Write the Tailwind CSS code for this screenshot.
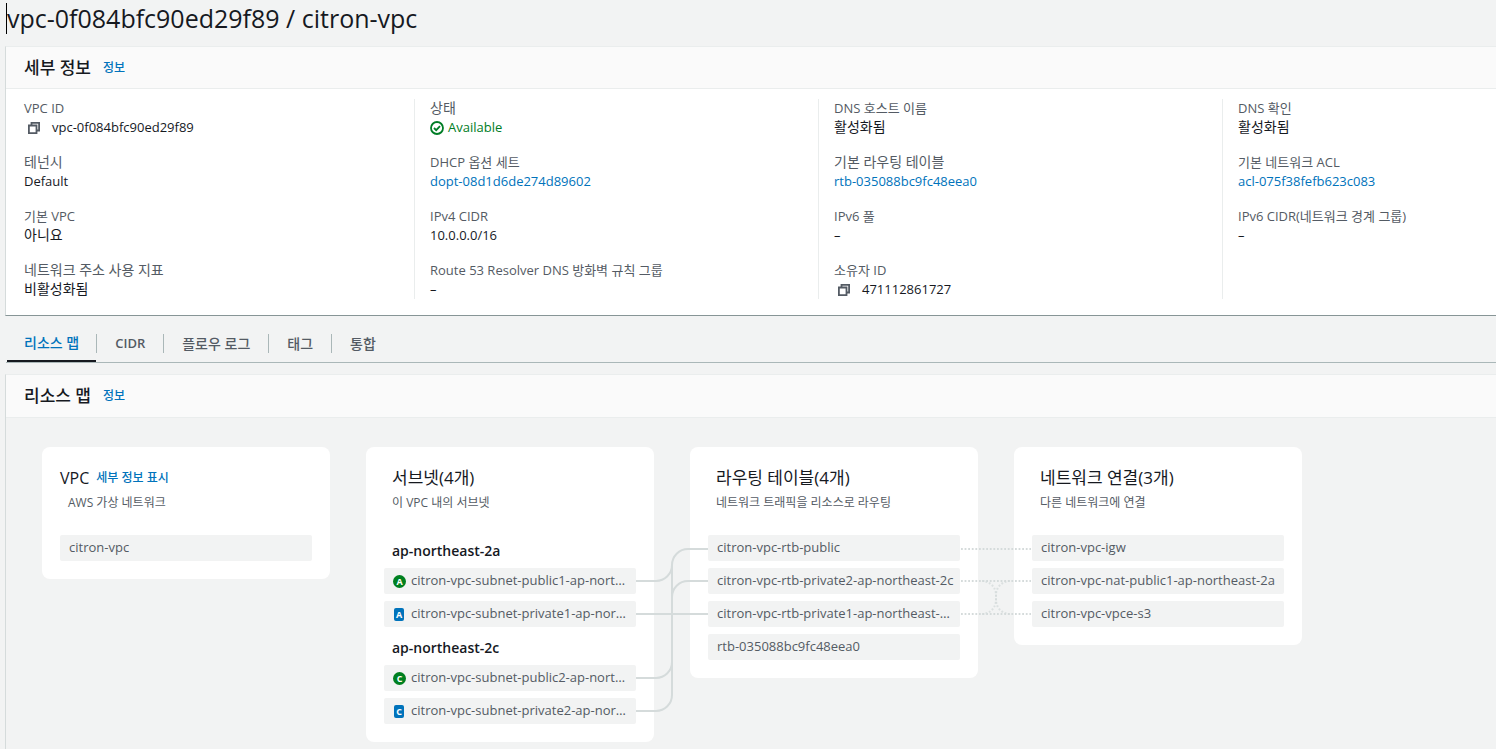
<!DOCTYPE html>
<html lang="ko">
<head>
    <meta charset="UTF-8">
    <meta name="viewport" content="width=device-width, initial-scale=1.0">
    <title>vpc-0f084bfc90ed29f89 / citron-vpc</title>
    <script src="https://cdn.jsdelivr.net/npm/@tailwindcss/browser@4"></script>
</head>
<body class="h-screen overflow-hidden bg-[#f2f3f3] pl-[5px] font-['Open_Sans','Noto_Sans_CJK_KR',sans-serif] text-[13px] text-[#16191f]">
    <!-- Shared icons -->
    <svg class="hidden">
        <symbol id="icon-copy" viewBox="0 0 14 14">
            <path d="M4.500 4.500V1.900h7.600v7.600H9.500M1.900 4.500h7.600v7.600H1.900z" fill="none" stroke="#545b64" stroke-width="1.800"/>
        </symbol>
    </svg>

    <header class="h-[46px] pt-[3px]">
        <h1 class="ml-px h-[31px] border-l border-black text-[25px] leading-[30px]">vpc-0f084bfc90ed29f89 / citron-vpc</h1>
    </header>

    <main>
        <!-- Details -->
        <section class="border-y border-l border-t-[#eaeded] border-b-[#879596] border-l-[#d5dbdb] bg-white">
            <div class="flex h-[42px] items-center gap-3 border-b border-[#eaeded] bg-[#fafafa] pl-[18px]">
                <h2 class="text-[17px] font-medium leading-[22px]">세부 정보</h2>
                <a href="#" class="text-xs font-medium text-[#0073bb]">정보</a>
            </div>
            <div class="grid grid-cols-[408px_404px_404px_1fr] pt-[10px] pb-4">
                <dl class="flex flex-col gap-4 pl-[18px]">
                    <div>
                        <dt class="leading-[18px] text-[#545b64]">VPC ID</dt>
                        <dd class="flex items-center leading-5"><button aria-label="VPC ID 복사" class="ml-[3px] mr-[11px] pt-[2px]"><svg class="size-[14px]"><use href="#icon-copy"/></svg></button>vpc-0f084bfc90ed29f89</dd>
                    </div>
                    <div>
                        <dt class="text-sm leading-[18px] text-[#545b64]">테넌시</dt>
                        <dd class="leading-5">Default</dd>
                    </div>
                    <div>
                        <dt class="leading-[18px] text-[#545b64]">기본 VPC</dt>
                        <dd class="text-sm leading-5">아니요</dd>
                    </div>
                    <div>
                        <dt class="text-sm leading-[18px] text-[#545b64]">네트워크 주소 사용 지표</dt>
                        <dd class="text-sm leading-5">비활성화됨</dd>
                    </div>
                </dl>
                <dl class="flex flex-col gap-4 border-l border-[#eaeded] pl-[15px]">
                    <div>
                        <dt class="text-sm leading-[18px] text-[#545b64]">상태</dt>
                        <dd class="flex items-center gap-1 leading-5 text-[#007d26]">
                            <svg class="mt-[2px] size-[14px]" viewBox="0 0 14 14" fill="none" stroke="#007d26" stroke-width="1.800"><circle cx="7" cy="7" r="6"/><path d="M4 7l2.200 2.200L10 5.200"/></svg>Available
                        </dd>
                    </div>
                    <div>
                        <dt class="leading-[18px] text-[#545b64]">DHCP 옵션 세트</dt>
                        <dd class="leading-5"><a href="#" class="text-[#0073bb]">dopt-08d1d6de274d89602</a></dd>
                    </div>
                    <div>
                        <dt class="leading-[18px] text-[#545b64]">IPv4 CIDR</dt>
                        <dd class="leading-5">10.0.0.0/16</dd>
                    </div>
                    <div>
                        <dt class="leading-[18px] text-[#545b64]">Route 53 Resolver DNS 방화벽 규칙 그룹</dt>
                        <dd class="leading-5">–</dd>
                    </div>
                </dl>
                <dl class="flex flex-col gap-4 border-l border-[#eaeded] pl-[15px]">
                    <div>
                        <dt class="leading-[18px] text-[#545b64]">DNS 호스트 이름</dt>
                        <dd class="text-sm leading-5">활성화됨</dd>
                    </div>
                    <div>
                        <dt class="text-sm leading-[18px] text-[#545b64]">기본 라우팅 테이블</dt>
                        <dd class="leading-5"><a href="#" class="text-[#0073bb]">rtb-035088bc9fc48eea0</a></dd>
                    </div>
                    <div>
                        <dt class="leading-[18px] text-[#545b64]">IPv6 풀</dt>
                        <dd class="leading-5">–</dd>
                    </div>
                    <div>
                        <dt class="leading-[18px] text-[#545b64]">소유자 ID</dt>
                        <dd class="flex items-center leading-5"><button aria-label="소유자 ID 복사" class="ml-[3px] mr-[11px] pt-[2px]"><svg class="size-[14px]"><use href="#icon-copy"/></svg></button>471112861727</dd>
                    </div>
                </dl>
                <dl class="flex flex-col gap-4 border-l border-[#eaeded] pl-[15px]">
                    <div>
                        <dt class="leading-[18px] text-[#545b64]">DNS 확인</dt>
                        <dd class="text-sm leading-5">활성화됨</dd>
                    </div>
                    <div>
                        <dt class="leading-[18px] text-[#545b64]">기본 네트워크 ACL</dt>
                        <dd class="leading-5"><a href="#" class="text-[#0073bb]">acl-075f38fefb623c083</a></dd>
                    </div>
                    <div>
                        <dt class="leading-[18px] text-[#545b64]">IPv6 CIDR(네트워크 경계 그룹)</dt>
                        <dd class="leading-5">–</dd>
                    </div>
                </dl>
            </div>
        </section>

        <!-- Tabs -->
        <nav class="ml-px mt-[9px] flex h-[38px] items-stretch border-b border-[#aab7b8] text-sm font-medium text-[#545b64]">
            <a href="#" class="ml-px flex items-center border-b-2 border-[#16191f] px-[17px] text-[#0073bb]">리소스 맵</a>
            <a href="#" class="my-[9px] flex items-center border-l border-[#aab7b8] px-[18px] text-[13px] font-semibold">CIDR</a>
            <a href="#" class="my-[9px] flex items-center border-l border-[#aab7b8] px-[18px]">플로우 로그</a>
            <a href="#" class="my-[9px] flex items-center border-l border-[#aab7b8] px-[18px]">태그</a>
            <a href="#" class="my-[9px] flex items-center border-l border-[#aab7b8] px-[18px]">통합</a>
        </nav>

        <!-- Resource map -->
        <section class="mt-[11px] border-l border-t border-l-[#d5dbdb] border-t-[#eaeded] pb-9">
            <div class="flex h-[43px] items-center gap-3 border-b border-[#eaeded] bg-[#fafafa] pl-[18px]">
                <h2 class="text-[17px] font-medium leading-[22px]">리소스 맵</h2>
                <a href="#" class="text-xs font-medium text-[#0073bb]">정보</a>
            </div>
            <div class="relative ml-9 mt-[29px] flex items-start gap-9 text-[#545b64]">
                <div class="w-[288px] shrink-0 rounded-lg bg-white p-[18px]">
                    <div class="h-[70px]">
                        <h3 class="flex items-center gap-[7px] pt-px text-base leading-6 text-[#16191f]">VPC <button class="text-xs font-medium text-[#0073bb]">세부 정보 표시</button></h3>
                        <p class="pl-2 text-xs leading-[26px]">AWS 가상 네트워크</p>
                    </div>
                    <ul>
                        <li class="h-[26px] rounded-xs bg-[#f2f3f3] px-[9px] leading-6">citron-vpc</li>
                    </ul>
                </div>

                <div class="w-[288px] shrink-0 rounded-lg bg-white p-[18px]">
                    <div class="h-[70px] pl-2">
                        <h3 class="pt-px text-[17px] leading-6 text-[#16191f]">서브넷(4개)</h3>
                        <p class="text-xs leading-[26px]">이 VPC 내의 서브넷</p>
                    </div>
                    <h4 class="h-[33px] pl-2 text-sm font-semibold leading-[31px] text-[#16191f]">ap-northeast-2a</h4>
                    <ul class="flex flex-col gap-[7px]">
                        <li class="flex h-[26px] items-center whitespace-nowrap rounded-xs bg-[#f2f3f3] px-[9px]">
                            <span class="mr-[5px] grid size-[13px] shrink-0 place-items-center rounded-full bg-[#008020] text-[9px] font-bold leading-none text-white">A</span>
                            <span class="pb-[2px] leading-6">citron-vpc-subnet-public1-ap-nort…</span>
                        </li>
                        <li class="flex h-[26px] items-center whitespace-nowrap rounded-xs bg-[#f2f3f3] px-[9px]">
                            <span class="ml-px mr-[7px] grid h-[13px] w-[10px] shrink-0 place-items-center rounded-xs bg-[#0073bb] text-[9px] font-bold leading-none text-white">A</span>
                            <span class="pb-[2px] leading-6">citron-vpc-subnet-private1-ap-nor…</span>
                        </li>
                    </ul>
                    <h4 class="h-[38px] pl-2 pt-[5px] text-sm font-semibold leading-[31px] text-[#16191f]">ap-northeast-2c</h4>
                    <ul class="flex flex-col gap-[7px]">
                        <li class="flex h-[26px] items-center whitespace-nowrap rounded-xs bg-[#f2f3f3] px-[9px]">
                            <span class="mr-[5px] grid size-[13px] shrink-0 place-items-center rounded-full bg-[#008020] text-[9px] font-bold leading-none text-white">C</span>
                            <span class="pb-[2px] leading-6">citron-vpc-subnet-public2-ap-nort…</span>
                        </li>
                        <li class="flex h-[26px] items-center whitespace-nowrap rounded-xs bg-[#f2f3f3] px-[9px]">
                            <span class="ml-px mr-[7px] grid h-[13px] w-[10px] shrink-0 place-items-center rounded-xs bg-[#0073bb] text-[9px] font-bold leading-none text-white">C</span>
                            <span class="pb-[2px] leading-6">citron-vpc-subnet-private2-ap-nor…</span>
                        </li>
                    </ul>
                </div>

                <div class="w-[288px] shrink-0 rounded-lg bg-white p-[18px]">
                    <div class="h-[70px] pl-2">
                        <h3 class="pt-px text-[17px] leading-6 text-[#16191f]">라우팅 테이블(4개)</h3>
                        <p class="text-xs leading-[26px]">네트워크 트래픽을 리소스로 라우팅</p>
                    </div>
                    <ul class="flex flex-col gap-[7px]">
                        <li class="h-[26px] whitespace-nowrap rounded-xs bg-[#f2f3f3] px-[9px] leading-6">citron-vpc-rtb-public</li>
                        <li class="h-[26px] whitespace-nowrap rounded-xs bg-[#f2f3f3] px-[9px] leading-6">citron-vpc-rtb-private2-ap-northeast-2c</li>
                        <li class="h-[26px] whitespace-nowrap rounded-xs bg-[#f2f3f3] px-[9px] leading-6">citron-vpc-rtb-private1-ap-northeast-…</li>
                        <li class="h-[26px] whitespace-nowrap rounded-xs bg-[#f2f3f3] px-[9px] leading-6">rtb-035088bc9fc48eea0</li>
                    </ul>
                </div>

                <div class="w-[288px] shrink-0 rounded-lg bg-white p-[18px]">
                    <div class="h-[70px] pl-2">
                        <h3 class="pt-px text-[17px] leading-6 text-[#16191f]">네트워크 연결(3개)</h3>
                        <p class="text-xs leading-[26px]">다른 네트워크에 연결</p>
                    </div>
                    <ul class="flex flex-col gap-[7px]">
                        <li class="h-[26px] whitespace-nowrap rounded-xs bg-[#f2f3f3] px-[9px] leading-6">citron-vpc-igw</li>
                        <li class="h-[26px] whitespace-nowrap rounded-xs bg-[#f2f3f3] px-[9px] leading-6">citron-vpc-nat-public1-ap-northeast-2a</li>
                        <li class="h-[26px] whitespace-nowrap rounded-xs bg-[#f2f3f3] px-[9px] leading-6">citron-vpc-vpce-s3</li>
                    </ul>
                </div>

                <!-- Subnet to route table connectors -->
                <svg class="pointer-events-none absolute left-[594px] top-[88px] h-[192px] w-[72px]" viewBox="0 0 72 192" fill="none" stroke="#d5dbdb" stroke-width="2">
                    <path d="M0 46h20a16 16 0 0 0 16-16"/>
                    <path d="M0 79h72"/>
                    <path d="M0 143h20a16 16 0 0 0 16-16"/>
                    <path d="M0 176h20a16 16 0 0 0 16-16V30a16 16 0 0 1 16-16h20"/>
                    <path d="M36 62a16 16 0 0 1 16-16h20"/>
                </svg>

                <!-- Route table to gateway connectors -->
                <svg class="pointer-events-none absolute left-[918px] top-[88px] h-[104px] w-[72px]" viewBox="0 0 72 104" fill="none" stroke="#d5dbdb" stroke-width="2" stroke-dasharray="1.800 1.800">
                    <path d="M1 14h70M1 46h70M1 79h70"/>
                    <path stroke-opacity="0.800" d="M22 46a14 14 0 0 1 14 14v5a14 14 0 0 0 14 14"/>
                    <path stroke-opacity="0.800" d="M22 79a14 14 0 0 0 14-14v-5a14 14 0 0 1 14-14"/>
                </svg>
            </div>
        </section>
    </main>
</body>
</html>
